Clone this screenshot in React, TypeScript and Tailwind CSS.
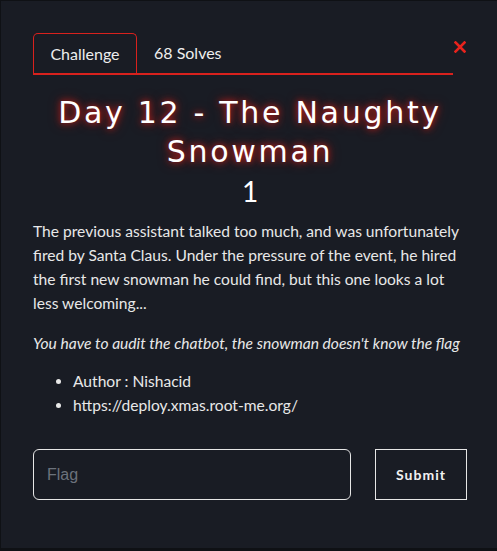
import React from 'react';

export default function App() {
  return (
    <div className="h-[551px] w-[497px] overflow-hidden bg-[#0f1115]">
      <div
        className="ml-px mt-px h-[547px] w-[496px] bg-[#191c24] pl-[32px] pr-[30px] pt-[32px] text-[#f1f1f1]"
        style={{ fontFamily: 'Lato, "Open Sans", sans-serif' }}
      >
        <div className="flex items-start">
          <div className="flex h-[42px] w-[420px] items-stretch border-b-2 border-[#d8211d]">
            <div className="flex w-[104px] items-center justify-center rounded-t-[5px] border border-b-0 border-[#d8211d] text-[16px] text-[#eeeeee]">
              Challenge
            </div>
            <div className="flex items-center pl-[17px] text-[16px] text-[#eeeeee]">68 Solves</div>
          </div>
          <button className="ml-auto mt-[7px] flex h-[14px] w-[14px] items-center justify-center">
            <svg width="12" height="12" viewBox="0 0 12 12">
              <path d="M1.5 1.5L10.5 10.5M10.5 1.5L1.5 10.5" stroke="#e8231d" strokeWidth="2.6" strokeLinecap="square" />
            </svg>
          </button>
        </div>

        <h1
          className="mt-[18px] text-center text-[30px] leading-[39px] tracking-[2.7px] text-white"
          style={{ fontFamily: '"DejaVu Sans", sans-serif', textShadow: '0 0 6px #c4201c, 0 0 12px #8a1512' }}
        >
          Day 12 - The Naughty
          <br />
          Snowman
        </h1>
        <div className="mt-[3px] text-center text-[28px] leading-[34px] text-white">1</div>

        <p className="mt-[11px] text-[15.6px] leading-[24px] text-[#e8e8e8]">
          The previous assistant talked too much, and was unfortunately fired by Santa Claus. Under the pressure of the
          event, he hired the first new snowman he could find, but this one looks a lot less welcoming...
        </p>
        <p className="mt-[16px] text-[15.6px] leading-[24px] italic text-[#e8e8e8]">
          You have to audit the chatbot, the snowman doesn't know the flag
        </p>
        <ul className="mt-[14px] list-disc pl-[40px] text-[15.6px] leading-[24px] text-[#e8e8e8]">
          <li>Author : Nishacid</li>
          <li>https://deploy.xmas.root-me.org/</li>
        </ul>

        <div className="mt-[32px] flex items-start">
          <input
            placeholder="Flag"
            className="h-[51px] w-[318px] rounded-[6px] border-[1.5px] border-[#e6e6e6] bg-transparent px-[13px] text-[16px] text-white outline-none placeholder:text-[#6c727c]"
            style={{ fontFamily: '"Liberation Sans", Arial, sans-serif' }}
          />
          <button className="ml-auto h-[51px] w-[92px] border border-[#e6e6e6] text-[14px] font-bold tracking-[1px] text-[#f1f1f1]">
            Submit
          </button>
        </div>
      </div>
    </div>
  );
}
